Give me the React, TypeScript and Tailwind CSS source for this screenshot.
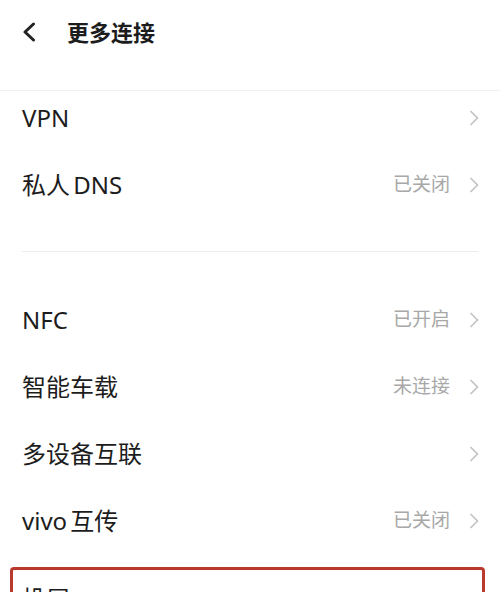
import React from 'react';

const font = { fontFamily: '"Noto Sans", "Noto Sans CJK SC", sans-serif' };

function Chevron() {
  return (
    <svg viewBox="0 0 10 16" fill="none" stroke="#c4c4c4" strokeWidth={1.7} className="w-[10px] h-[16px] shrink-0">
      <polyline points="1.5 1 8.5 8 1.5 15" />
    </svg>
  );
}

function Row({ label, value, arrow = true }: { label: string; value?: string; arrow?: boolean }) {
  return (
    <div className="flex items-center h-[67px] pl-[22px] pr-[21px]">
      <span className="flex-1 text-[24px] leading-[34px] text-[#1c1c1c] [word-spacing:-3px]">{label}</span>
      {value && <span className="text-[19px] text-[#a8a8a8] mr-[19px]">{value}</span>}
      {arrow && <Chevron />}
    </div>
  );
}

export default function App() {
  return (
    <div className="w-[500px] h-[592px] overflow-hidden bg-white" style={font}>
      {/* Header */}
      <div className="h-[91px] border-b border-[#f1f1f1]">
        <div className="flex items-center h-[64px]">
          <svg viewBox="0 0 14 20" fill="none" stroke="#222" strokeWidth={3} strokeLinecap="round" strokeLinejoin="round" className="ml-[22px] w-[14px] h-[20px]">
            <polyline points="11.5 2 3 10 11.5 18" />
          </svg>
          <span className="ml-[31px] text-[22px] font-semibold text-[#1c1c1c]">更多连接</span>
        </div>
      </div>

      {/* Section 1 */}
      <div className="-mt-[7px]">
        <Row label="VPN" />
        <Row label="私人 DNS" value="已关闭" />
      </div>

      <div className="mx-[22px] mt-[33px] border-t border-[#ececec]" />

      {/* Section 2 */}
      <div className="mt-[34px]">
        <Row label="NFC" value="已开启" />
        <Row label="智能车载" value="未连接" />
        <Row label="多设备互联" />
        <Row label="vivo 互传" value="已关闭" />
      </div>

      {/* Highlighted row (continues below the fold) */}
      <div className="ml-[10px] mr-[15px] mt-[13px] border-[3px] border-[#b9392e] rounded-[4px]">
        <div className="h-[67px] pt-[12px] pl-[9px]">
          <span className="text-[24px] leading-[34px] text-[#1c1c1c]">投屏</span>
        </div>
      </div>
    </div>
  );
}
